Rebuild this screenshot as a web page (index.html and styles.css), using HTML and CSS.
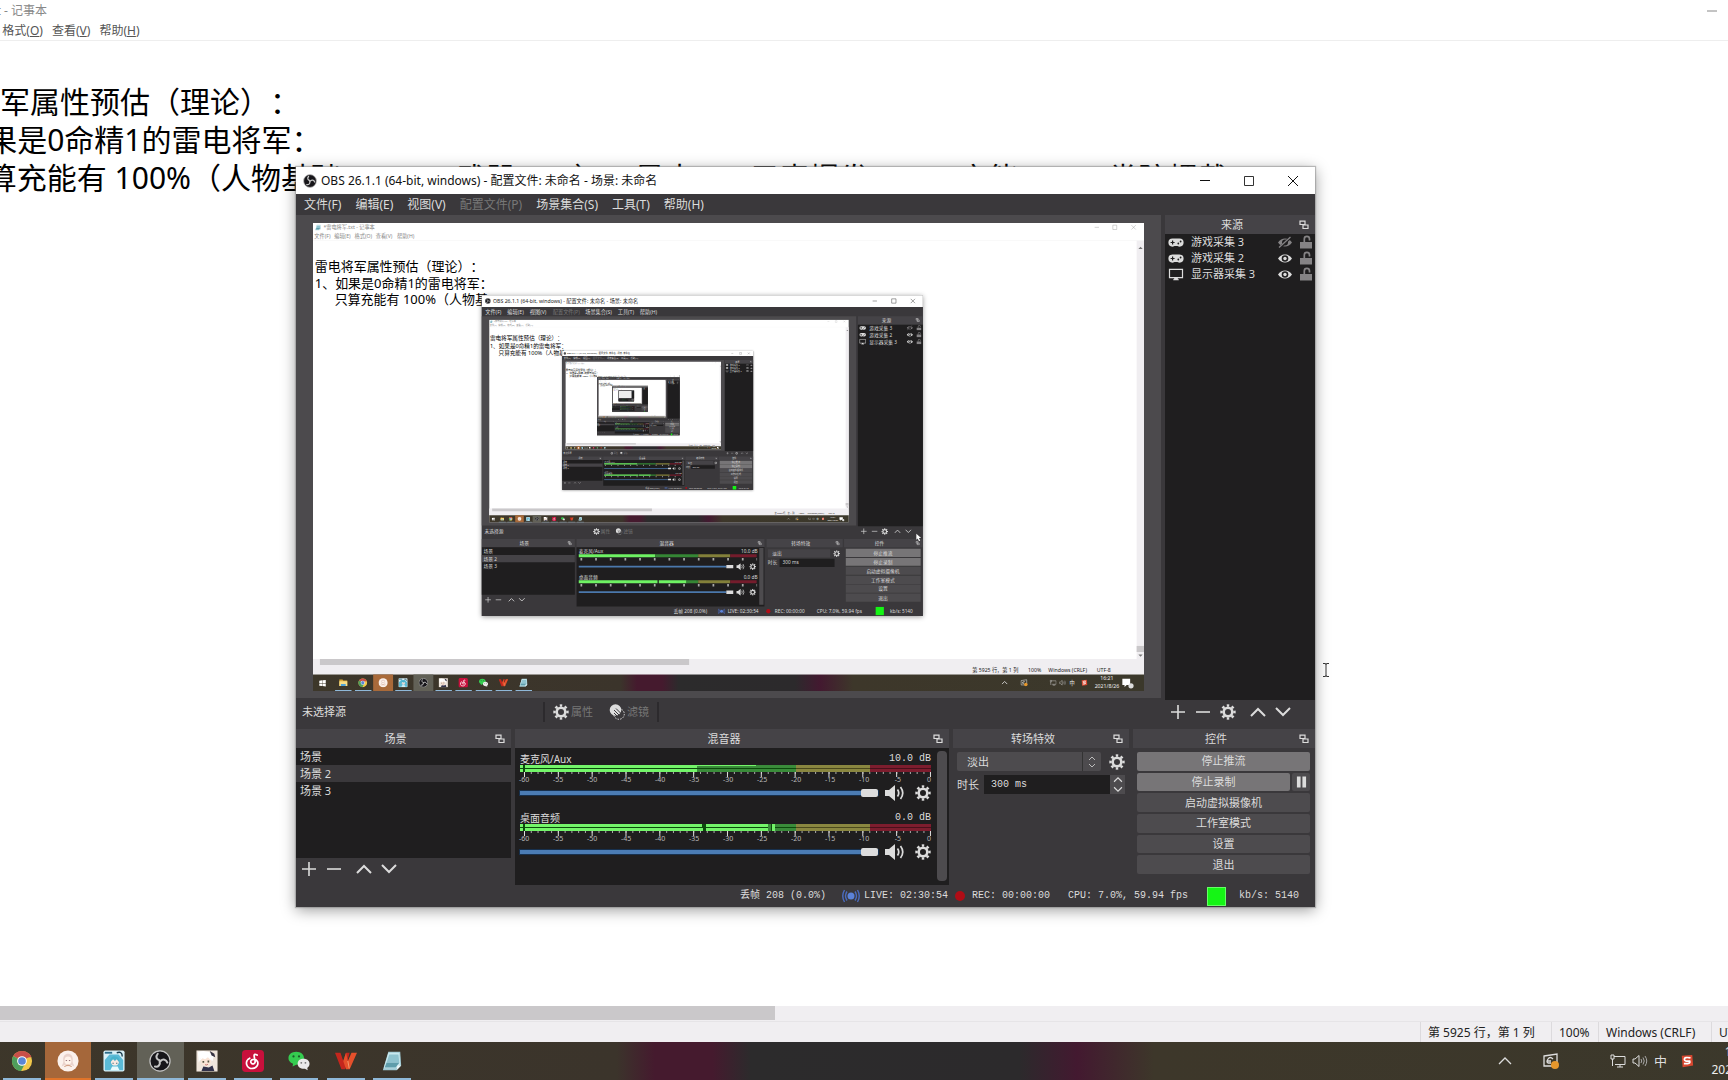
FILE: index.html
```html
<!DOCTYPE html>
<html lang="zh-CN">
<head>
<meta charset="utf-8">
<title>记事本 - OBS</title>
<link rel="stylesheet" href="styles.css">
</head>
<body>
<svg class="defs" aria-hidden="true">
  <defs>
    <symbol id="i-plus" viewBox="0 0 16 16"><path d="M8 1v14M1 8h14" fill="none" stroke="currentColor" stroke-width="1.6"/></symbol>
    <symbol id="i-minus" viewBox="0 0 16 16"><path d="M1 8h14" fill="none" stroke="currentColor" stroke-width="1.6"/></symbol>
    <symbol id="i-up" viewBox="0 0 16 16"><path d="M1 12l7-7 7 7" fill="none" stroke="currentColor" stroke-width="2"/></symbol>
    <symbol id="i-down" viewBox="0 0 16 16"><path d="M1 4l7 7 7-7" fill="none" stroke="currentColor" stroke-width="2"/></symbol>
    <symbol id="i-gear" viewBox="0 0 16 16"><circle cx="8" cy="8" r="4.3" fill="none" stroke="currentColor" stroke-width="2.6"/><circle cx="8" cy="8" r="6.5" fill="none" stroke="currentColor" stroke-width="2.4" pathLength="16" stroke-dasharray="1 1" stroke-dashoffset="0.5"/></symbol>
    <symbol id="i-float" viewBox="0 0 10 10"><path d="M1 1.200h5v3.300H1zM4 5h5v3.500H4z" fill="none" stroke="currentColor" stroke-width="1.2"/></symbol>
    <symbol id="i-pad" viewBox="0 0 16 12"><path d="M4.500 2h7a4 4 0 0 1 0 8.200c-1.300 0-1.800-.7-2.500-.7H7c-.7 0-1.200.7-2.500.7A4 4 0 0 1 4.500 2z" fill="currentColor"/><path d="M4.600 4v4M2.600 6h4" stroke="#1f1e1f" stroke-width="1.2"/><circle cx="10.300" cy="7" r=".9" fill="#1f1e1f"/><circle cx="12.600" cy="5" r=".9" fill="#1f1e1f"/></symbol>
    <symbol id="i-monitor" viewBox="0 0 16 14"><path d="M1 1.500h14v8.800H1z" fill="none" stroke="currentColor" stroke-width="1.300"/><path d="M6 10h4v2h1v1.200H5V12h1z" fill="currentColor"/></symbol>
    <symbol id="i-eye" viewBox="0 0 16 12"><path d="M1 6c3.500-5.300 10.500-5.300 14 0-3.500 5.300-10.500 5.300-14 0z" fill="currentColor"/><circle cx="8" cy="6" r="3.300" fill="#1f1e1f"/><circle cx="8" cy="6" r="1.700" fill="currentColor"/></symbol>
    <symbol id="i-eye-off" viewBox="0 0 16 12"><path d="M1 6c3.500-5.300 10.500-5.300 14 0-3.500 5.300-10.500 5.300-14 0z" fill="currentColor"/><circle cx="8" cy="6" r="3" fill="#1f1e1f"/><path d="M2.500 11.500L14 .5" stroke="#1f1e1f" stroke-width="2.600"/><path d="M2 11L13.500.5" stroke="currentColor" stroke-width="1.300"/></symbol>
    <symbol id="i-lock" viewBox="0 0 12 14"><path d="M4.300 7V4a2.600 2.600 0 0 1 5.200 0v1.500" fill="none" stroke="currentColor" stroke-width="1.700"/><path d="M0 7h12v6.500H0z" fill="currentColor"/></symbol>
    <symbol id="i-speaker" viewBox="0 0 20 16"><path d="M0 5h4l6-5v16l-6-5H0z" fill="currentColor"/><path d="M12.500 4.500q2.500 3.500 0 7M15.500 2q4.500 6 0 12" fill="none" stroke="currentColor" stroke-width="1.700"/></symbol>
    <symbol id="i-filter" viewBox="0 0 16 16"><circle cx="6.500" cy="6" r="5.800" fill="#dcdcdc"/><circle cx="10" cy="10" r="5.300" fill="none" stroke="#dcdcdc" stroke-width="1" stroke-dasharray="1.500 1.200"/><path d="M5 6l5 5M7 4.500l5 5M5 9l3.500 3.500" stroke="#3a383b" stroke-width="1"/></symbol>
    <symbol id="i-live" viewBox="0 0 18 14"><circle cx="9" cy="7" r="3.500" fill="#5b82d8"/><path d="M5 2.500q-3 4.500 0 9M13 2.500q3 4.500 0 9M2.500 1q-3.500 6 0 12M15.500 1q3.500 6 0 12" fill="none" stroke="#4a6cc0" stroke-width="1.400"/></symbol>
    <symbol id="i-obs" viewBox="0 0 24 24"><circle cx="12" cy="12" r="11" fill="#17161a" stroke="#c4c4c4" stroke-width="1.300"/><g fill="none" stroke="#c4c4c4" stroke-width="2.200" stroke-linecap="round"><path d="M12 11.500C8 10.500 7 7 9.500 4.200"/><path d="M12 11.500C8 10.500 7 7 9.500 4.200" transform="rotate(120 12 12)"/><path d="M12 11.500C8 10.500 7 7 9.500 4.200" transform="rotate(240 12 12)"/></g></symbol>
    <symbol id="t-start" viewBox="0 0 24 24"><path d="M3 5l8-1v7.500H3zM12 4l9-1v8.500h-9zM3 12.500h8V20l-8-1zM12 12.500h9V21l-9-1z" fill="#fff"/></symbol>
    <symbol id="t-folder" viewBox="0 0 24 24"><path d="M2 4h8l2 2h10v14H2z" fill="#d9a93a"/><path d="M2 8h20v12H2z" fill="#f7dd86"/><path d="M6 15h12v5H6z" fill="#4ea3d8"/></symbol>
    <symbol id="t-chrome" viewBox="0 0 24 24"><circle cx="12" cy="12" r="11" fill="#f2c84b"/><path d="M12 12L2.500 6.500A11 11 0 0 1 21.500 6.500z" fill="#c94f4a"/><path d="M2.500 6.500A11 11 0 0 0 11 23l4.500-8.500L12 12z" fill="#4f9d5c"/><path d="M12 7h9.800" stroke="#c94f4a" stroke-width="2"/><circle cx="12" cy="12" r="5.300" fill="#fff"/><circle cx="12" cy="12" r="4.200" fill="#5b86d6"/></symbol>
    <symbol id="t-avatar" viewBox="0 0 24 24"><circle cx="12" cy="12" r="11.500" fill="#fbf1ec"/><path d="M7 13C6 6 9 4 12 4s6 2 5 9l2 5-4-2-3 2-3-2-4 2z" fill="#ead3cc"/><ellipse cx="12" cy="11.500" rx="3.800" ry="4.300" fill="#fff3ea"/><path d="M9.500 11.500h1.500M13 11.500h1.500" stroke="#8e6570"/><path d="M8 18q4-3 8 0" stroke="#c98e6e" fill="none"/></symbol>
    <symbol id="t-miku" viewBox="0 0 24 24"><rect x=".5" y=".5" width="23" height="23" rx="2" fill="#d9f0f7"/><path d="M2 11l5-6h10l5 6v11H2z" fill="#5bbad6"/><path d="M2 3h8" stroke="#2c6d8a" stroke-width="2"/><path d="M15 3q6-2 6 4" stroke="#16394a" fill="none" stroke-width="1.500"/><circle cx="13" cy="12.500" r="4.500" fill="#f9e9e2"/><path d="M7.500 14q0-8 6-7 5 0 4.500 7l-3-4-2 2-2-2z" fill="#48b2cc"/><path d="M11 14v1M15 14v1" stroke="#256" stroke-width="1.200"/><path d="M8 22l2-4h6l2 4z" fill="#e8fafd"/></symbol>
    <symbol id="t-paimon" viewBox="0 0 24 24"><path d="M.5.5h23v23H.5z" fill="#efe5dc"/><path d="M2 2q9-3 18 3l-2 7-3-4-5 3-5-2-2 5z" fill="#fff"/><circle cx="11" cy="12" r="5.500" fill="#fae4d6"/><path d="M4 12q1-7 8-6 5 1 5 6l-4-4-3 2-3-1z" fill="#fff"/><path d="M8 12v2M13.500 11.500v2" stroke="#554" stroke-width="1.800"/><path d="M15 1l5 3 1 4-4-2z" fill="#363342"/><path d="M6 23l2-5 6 1 4-2 2 6z" fill="#31314a"/><path d="M10 16q2 1 3-.5" stroke="#b66" fill="none"/></symbol>
    <symbol id="t-netease" viewBox="0 0 24 24"><rect width="24" height="24" rx="4" fill="#c8103c"/><path d="M16.500 5.500q-3.500-1.800-3.300 1l1 5.500a2.400 2.400 0 1 1-2.800-1.500q3.600-1 5.500 2a5.500 5.500 0 0 1-5 7.500 5.800 5.800 0 0 1-3.500-11" fill="none" stroke="#fff" stroke-width="1.900" stroke-linecap="round"/></symbol>
    <symbol id="t-wechat" viewBox="0 0 24 24"><path d="M9 2c5 0 8.500 3 8.500 7S14 16 9 16l-4 2 .5-3C2 13.500.5 11.500.5 9 .5 5 4 2 9 2z" fill="#35cc50"/><circle cx="6" cy="7" r="1.200" fill="#1c5b2a"/><circle cx="12" cy="7" r="1.200" fill="#1c5b2a"/><path d="M17 9.500c4 0 6.500 2.500 6.500 5.500 0 2-1 3.500-2.500 4.500l.5 2.500-3-1.500c-4.500.5-8-2-8-5.500s2.500-5.500 6.500-5.500z" fill="#e9e9e9"/><circle cx="14.500" cy="14" r="1" fill="#777"/><circle cx="19" cy="14" r="1" fill="#777"/></symbol>
    <symbol id="t-wps" viewBox="0 0 24 24"><path d="M0 3h6l3 9 3-9h4l-5 18H7z" fill="#c4261d"/><path d="M12 3l2 9 4-9h6l-8 18h-4L9 12z" fill="#e5502b"/><path d="M14 12l1.500 8" stroke="#f0a070"/></symbol>
    <symbol id="t-notepad" viewBox="0 0 24 24"><path d="M8 2h13l1 15-5 5H2z" fill="#9fc9d3"/><path d="M8 3h12l1 13-5 4H3z" fill="#c9e8ee"/><path d="M9 5h10l1 9H6z" fill="#8fc3cf"/><path d="M6 14h14l-4 5H4z" fill="#5f9dab"/><path d="M17 22l5-5h-4z" fill="#eef8fa"/></symbol>
    <symbol id="s-net" viewBox="0 0 16 14"><path d="M4 2.500h11v8H5M1 1v4h3V1zM2.500 5v7M7 13h6M10 10.500V13" fill="none" stroke="#ddd"/></symbol>
    <symbol id="s-sound" viewBox="0 0 16 14"><path d="M1 5h2l4-3.500v11L3 9H1z" fill="none" stroke="#ddd"/><path d="M9 5q1.500 2 0 4M11 3.500q2.500 3.500 0 7M13 2q3.500 5 0 10" fill="none" stroke="#aaa"/></symbol>
    <symbol id="s-sogou" viewBox="0 0 16 16"><path d="M2 2l12-1 1 12-12 2z" fill="#d8472f"/><path d="M12 4.500Q5 3 5 6t6 2q1.500 3.500-6.500 3" fill="none" stroke="#fff" stroke-width="2"/></symbol>
    <symbol id="s-update" viewBox="0 0 18 18"><path d="M2 4l13-2v12H2z" fill="none" stroke="#ddd" stroke-width="1.300"/><path d="M11 7q-3-3-5 0t0 4h3M5 9h4" fill="none" stroke="#ddd" stroke-width="1.300"/><circle cx="13" cy="13" r="4" fill="#e6972c"/></symbol>
    <linearGradient id="barFill" gradientUnits="userSpaceOnUse" x1="-94" y1="0" x2="1826" y2="0">
      <stop offset="0" stop-color="#3d372a"/><stop offset=".37" stop-color="#3b342b"/><stop offset=".39" stop-color="#451a2e"/><stop offset=".42" stop-color="#451a2e"/><stop offset=".44" stop-color="#2c2b2c"/><stop offset=".58" stop-color="#2c2a2c"/><stop offset=".61" stop-color="#431930"/><stop offset=".65" stop-color="#3d372a"/><stop offset="1" stop-color="#3b382b"/>
    </linearGradient>
  </defs>
</svg>

<div class="desktop">
  <main class="notepad">
    <header class="np-title">
      <svg class="np-icon"><use href="#t-notepad"/></svg>
      <span class="np-name">*雷电将军.txt - 记事本</span>
      <button class="np-min" aria-label="最小化"><svg viewBox="0 0 12 12"><path d="M1 6h10" stroke="#888"/></svg></button>
    </header>
    <nav class="np-menu">
      <button>文件(<u>F</u>)</button><button>编辑(<u>E</u>)</button><button>格式(<u>O</u>)</button><button>查看(<u>V</u>)</button><button>帮助(<u>H</u>)</button>
    </nav>
    <textarea class="np-text" aria-label="文本" wrap="off" spellcheck="false" readonly>

雷电将军属性预估（理论）：
1、如果是0命精1的雷电将军：
      只算充能有 100%（人物基础 + 337，武器 608），暴击 5，元素爆发 180，充能 100，类陀螺戴</textarea>
    <div class="np-scroll"><div class="np-thumb"></div></div>
    <footer class="np-status">
      <span class="st-pos">第 5925 行，第 1 列</span><span class="st-zoom">100%</span><span class="st-eol">Windows (CRLF)</span><span class="st-enc">UTF-8</span>
    </footer>
  </main>
  <footer class="taskbar">
    <div class="apps">
      <button class="plain" aria-label="开始"><svg><use href="#t-start"/></svg></button>
      <button aria-label="文件夹"><svg><use href="#t-folder"/></svg></button>
      <button aria-label="Chrome"><svg><use href="#t-chrome"/></svg></button>
      <button class="alert" aria-label="直播"><svg><use href="#t-avatar"/></svg></button>
      <button aria-label="音乐"><svg><use href="#t-miku"/></svg></button>
      <button class="active" aria-label="OBS"><svg><use href="#i-obs"/></svg></button>
      <button aria-label="游戏"><svg><use href="#t-paimon"/></svg></button>
      <button aria-label="网易云音乐"><svg><use href="#t-netease"/></svg></button>
      <button aria-label="微信"><svg><use href="#t-wechat"/></svg></button>
      <button aria-label="WPS"><svg><use href="#t-wps"/></svg></button>
      <button aria-label="记事本"><svg><use href="#t-notepad"/></svg></button>
    </div>
    <div class="tray">
      <button class="tray-up" aria-label="显示隐藏的图标"><svg viewBox="0 0 14 14"><path d="M1 10l6-6 6 6" fill="none" stroke="#ddd" stroke-width="1.300"/></svg></button>
      <svg class="tray-update"><use href="#s-update"/></svg>
      <svg><use href="#s-net"/></svg>
      <svg><use href="#s-sound"/></svg>
      <span class="ime">中</span>
      <svg><use href="#s-sogou"/></svg>
      <time class="clock">16:21<br>2021/8/26</time>
    </div>
  </footer>
</div>

<section class="obs" aria-label="OBS">
  <header class="obs-title">
    <svg class="obs-logo"><use href="#i-obs"/></svg>
    <h1>OBS 26.1.1 (64-bit, windows) - 配置文件: 未命名 - 场景: 未命名</h1>
    <div class="win-buttons">
      <button aria-label="最小化"><svg viewBox="0 0 12 12"><path d="M1 5.500h10" stroke="#111" fill="none"/></svg></button>
      <button aria-label="最大化"><svg viewBox="0 0 12 12"><path d="M1.500 1.500h9v9h-9z" stroke="#333" fill="none"/></svg></button>
      <button aria-label="关闭"><svg viewBox="0 0 12 12"><path d="M1 1l10 10M11 1L1 11" stroke="#111" fill="none"/></svg></button>
    </div>
  </header>
  <nav class="obs-menu">
    <button>文件(F)</button><button>编辑(E)</button><button>视图(V)</button><button disabled>配置文件(P)</button><button>场景集合(S)</button><button>工具(T)</button><button>帮助(H)</button>
  </nav>

  <div class="upper">
    <div class="stage">
      <div class="preview">
        <svg class="canvas" viewBox="-94 0 1920 1080" preserveAspectRatio="none">
          <g id="desk">
            <rect x="-94" width="1920" height="1080" fill="#fff"/>
            <use href="#t-notepad" x="-90" y="3" width="15" height="15"/>
            <g class="m-soft">
              <text x="-70" y="15">*雷电将军.txt - 记事本</text>
              <text x="-91" y="35">文件(F)</text><text x="-45" y="35">编辑(E)</text><text x="2" y="35">格式(O)</text><text x="51" y="35">查看(V)</text><text x="100" y="35">帮助(H)</text>
            </g>
            <path d="M-94 40.500H1826" stroke="#eee"/>
            <path d="M1712 10h10M1754 5h9v10h-9zM1797 5l10 10M1807 5l-10 10" stroke="#999" fill="none"/>
            <g class="m-body">
              <text x="-90" y="111">雷电将军属性预估（理论）：</text>
              <text x="-90" y="150">1、如果是0命精1的雷电将军：</text>
              <text x="-44" y="188">只算充能有 100%（人物基</text>
            </g>
            <path d="M1809 41h17v965h-17z" fill="#f0eef1"/><path d="M1809 976h17v14h-17z" fill="#cac8ca"/>
            <path d="M1813 60l5-5 5 5zM1813 996l5 5 5-5z" fill="#777"/>
            <path d="M-94 1006H1826v36H-94z" fill="#f0eef1"/><path d="M-78 1006H775v14H-78z" fill="#cac8ca"/>
            <g class="m-status"><text x="1429" y="1037">第 5925 行，第 1 列</text><text x="1558" y="1037">100%</text><text x="1605" y="1037">Windows (CRLF)</text><text x="1717" y="1037">UTF-8</text></g>
            <path d="M-94 1042H1826v38H-94z" fill="url(#barFill)"/>
            <path d="M45 1042h46v38H45z" fill="#a96a3a"/><path d="M138 1042h46v38h-46z" fill="#626157"/>
            <path d="M-43 1079h38M3 1079h38M96 1079h38M189 1079h38M235 1079h38M282 1079h38M328 1079h38M374 1079h38" stroke="#8fb8d8" stroke-width="3"/>
            <g>
              <use href="#t-start" x="-82" y="1052" width="20" height="20"/><use href="#t-folder" x="-35" y="1050" width="22" height="22"/><use href="#t-chrome" x="10" y="1050" width="22" height="22"/><use href="#t-avatar" x="57" y="1050" width="22" height="22"/><use href="#t-miku" x="103" y="1050" width="22" height="22"/><use href="#i-obs" x="150" y="1050" width="22" height="22"/><use href="#t-paimon" x="196" y="1050" width="22" height="22"/><use href="#t-netease" x="242" y="1050" width="22" height="22"/><use href="#t-wechat" x="289" y="1050" width="22" height="22"/><use href="#t-wps" x="335" y="1050" width="22" height="22"/><use href="#t-notepad" x="381" y="1050" width="22" height="22"/>
              <use href="#s-update" x="1540" y="1052" width="18" height="18"/><use href="#s-net" x="1608" y="1054" width="16" height="14"/><use href="#s-sound" x="1630" y="1054" width="16" height="14"/><use href="#s-sogou" x="1680" y="1053" width="16" height="16"/>
            </g>
            <path d="M1498 1064l6-6 6 6" stroke="#ddd" fill="none" stroke-width="2"/>
            <g class="m-tray"><text x="1654" y="1066">中</text><text x="1725" y="1055">16:21</text><text x="1712" y="1074">2021/8/26</text></g>
            <path d="M1776 1052h18v14h-8l-5 5v-5h-5z" fill="#fff"/><circle cx="1796" cy="1068" r="6" fill="#ddd"/>

            <path class="m-shadow" d="M296 167h1019v740H296z"/>
            <path d="M296 167h1019v27H296z" fill="#fff"/>
            <use href="#i-obs" x="303" y="173" width="14" height="14"/>
            <text class="m-title" x="322" y="185">OBS 26.1.1 (64-bit, windows) - 配置文件: 未命名 - 场景: 未命名</text>
            <path d="M1199 180h10M1243 175h10v10h-10zM1287 175l10 10M1297 175l-10 10" stroke="#222" fill="none"/>
            <path d="M296 194h1019v713H296z" fill="#3a383b"/>
            <g class="m-menu"><text x="304" y="209">文件(F)</text><text x="355" y="209">编辑(E)</text><text x="407" y="209">视图(V)</text><text class="m-off" x="460" y="209">配置文件(P)</text><text x="535" y="209">场景集合(S)</text><text x="610" y="209">工具(T)</text><text x="661" y="209">帮助(H)</text></g>
            <path d="M296 215h865v483H296z" fill="#4c4a4d"/>
            <path d="M1165 215h150v20h-150zM296 729h215v19H296zM515 729h434v19H515zM954 729h176v19H954zM1133 729h182v19h-182z" fill="#454347"/>
            <path d="M1165 235h150v465h-150zM296 748h215v110H296zM515 748h434v137H515zM984 775h127v19H984z" fill="#1f1e1f"/>
            <path d="M296 766h215v17H296zM957 753h144v19H957z" fill="#454347"/>
            <path d="M1137 793h173v19h-173zM1137 814h173v19h-173zM1137 834h173v19h-173zM1137 855h173v19h-173z" fill="#4d4b4e"/>
            <path d="M1137 752h173v19h-173zM1137 773h173v18h-173z" fill="#777577"/>
            <g class="m-mid">
              <text x="1231" y="229">来源</text><text x="394" y="743">场景</text><text x="723" y="743">混音器</text><text x="1033" y="743">转场特效</text><text x="1215" y="743">控件</text>
              <text x="1223" y="766">停止推流</text><text x="1223" y="786">停止录制</text><text x="1223" y="807">启动虚拟摄像机</text><text x="1223" y="828">工作室模式</text><text x="1223" y="848">设置</text><text x="1223" y="869">退出</text>
            </g>
            <g class="m-text">
              <text x="1191" y="247">游戏采集 3</text><text x="1191" y="263">游戏采集 2</text><text x="1191" y="279">显示器采集 3</text>
              <text x="302" y="716">未选择源</text><text x="300" y="762">场景</text><text x="300" y="779">场景 2</text><text x="300" y="796">场景 3</text>
              <text x="520" y="762">麦克风/Aux</text><text x="895" y="762">10.0 dB</text><text x="520" y="821">桌面音频</text><text x="901" y="821">0.0 dB</text>
              <text x="967" y="767">淡出</text><text x="957" y="788">时长</text><text x="991" y="788">300 ms</text>
              <text x="739" y="900">丢帧 208 (0.0%)</text><text x="864" y="900">LIVE: 02:30:54</text><text x="973" y="900">REC: 00:00:00</text><text x="1070" y="900">CPU: 7.0%, 59.94 fps</text><text x="1239" y="900">kb/s: 5140</text>
              <text class="m-off" x="571" y="716">属性</text><text class="m-off" x="623" y="716">滤镜</text>
            </g>
            <g color="#dcdcdc">
              <use href="#i-pad" x="1168" y="236" width="16" height="12"/><use href="#i-pad" x="1168" y="252" width="16" height="12"/><use href="#i-monitor" x="1168" y="267" width="16" height="14"/>
              <use href="#i-eye-off" color="#858385" x="1277" y="236" width="16" height="12"/><use href="#i-eye" x="1277" y="252" width="16" height="12"/><use href="#i-eye" x="1277" y="268" width="16" height="12"/>
              <use href="#i-plus" x="1171" y="704" width="15" height="15"/><use href="#i-minus" x="1196" y="704" width="15" height="15"/><use href="#i-gear" x="1219" y="704" width="16" height="16"/><use href="#i-up" x="1249" y="704" width="15" height="15"/><use href="#i-down" x="1274" y="704" width="15" height="15"/>
              <use href="#i-plus" x="303" y="862" width="15" height="15"/><use href="#i-minus" x="327" y="862" width="15" height="15"/><use href="#i-up" x="357" y="862" width="15" height="15"/><use href="#i-down" x="381" y="862" width="15" height="15"/>
              <use href="#i-gear" x="553" y="704" width="16" height="16"/><use href="#i-filter" x="605" y="704" width="16" height="16"/>
              <use href="#i-gear" x="914" y="785" width="16" height="16"/><use href="#i-gear" x="914" y="844" width="16" height="16"/><use href="#i-gear" x="1108" y="755" width="16" height="16"/>
              <use href="#i-speaker" x="884" y="785" width="20" height="16"/><use href="#i-speaker" x="884" y="844" width="20" height="16"/>
              <use href="#i-float" x="1298" y="219" width="10" height="10"/><use href="#i-float" x="494" y="734" width="10" height="10"/><use href="#i-float" x="933" y="734" width="10" height="10"/><use href="#i-float" x="1113" y="734" width="10" height="10"/><use href="#i-float" x="1298" y="734" width="10" height="10"/>
              <use href="#i-live" x="841" y="889" width="18" height="14"/>
            </g>
            <g color="#858385"><use href="#i-lock" x="1300" y="235" width="12" height="13"/><use href="#i-lock" x="1300" y="251" width="12" height="13"/><use href="#i-lock" x="1300" y="267" width="12" height="13"/></g>
            <path d="M520 768H697M520 828H702M705 828H769" stroke="#6ef263" stroke-width="7"/>
            <path d="M697 768h99M769 828h27" stroke="#358635" stroke-width="7"/><path d="M796 768h74M796 828h74" stroke="#83803a" stroke-width="7"/><path d="M870 768h61M870 828h61" stroke="#741c2c" stroke-width="7"/>
            <path d="M524 776H932M524 836H932" stroke="#aaa" stroke-width="6" stroke-dasharray="4 29.900"/>
            <path d="M520 793H861M520 852H861" stroke="#4b78ac" stroke-width="4"/>
            <path d="M861 789h16v8h-16zM861 848h16v8h-16z" fill="#ddd"/><path d="M937 750h10v131h-10z" fill="#4d4b4e"/>
            <circle cx="958" cy="896" r="5" fill="#b00d16"/><path d="M1206 886h19v19h-19z" fill="#15f515"/>
          </g>
          <svg x="313" y="223" width="831" height="468" viewBox="-94 0 1920 1080" preserveAspectRatio="none">
            <use href="#desk"/>
            <svg x="313" y="223" width="831" height="468" viewBox="-94 0 1920 1080" preserveAspectRatio="none">
              <use href="#desk"/>
              <svg x="313" y="223" width="831" height="468" viewBox="-94 0 1920 1080" preserveAspectRatio="none">
                <use href="#desk"/>
                <svg x="313" y="223" width="831" height="468" viewBox="-94 0 1920 1080" preserveAspectRatio="none"><use href="#desk"/><path d="M313 223h831v468H313z" fill="#eee"/></svg>
              </svg>
            </svg>
          </svg>
          <path d="M1300 717v14l3-3 3 6 3-1-3-6h5z" fill="#fff"/>
        </svg>
      </div>
      <div class="source-bar">
        <span class="source-none">未选择源</span>
        <button disabled><svg><use href="#i-gear"/></svg>属性</button>
        <button disabled><svg><use href="#i-filter"/></svg>滤镜</button>
      </div>
    </div>
    <section class="dock sources">
      <h2>来源<svg><use href="#i-float"/></svg></h2>
      <ul>
        <li><svg class="kind"><use href="#i-pad"/></svg><span>游戏采集 3</span><svg class="eye off"><use href="#i-eye-off"/></svg><svg class="lock"><use href="#i-lock"/></svg></li>
        <li><svg class="kind"><use href="#i-pad"/></svg><span>游戏采集 2</span><svg class="eye"><use href="#i-eye"/></svg><svg class="lock"><use href="#i-lock"/></svg></li>
        <li><svg class="kind"><use href="#i-monitor"/></svg><span>显示器采集 3</span><svg class="eye"><use href="#i-eye"/></svg><svg class="lock"><use href="#i-lock"/></svg></li>
      </ul>
      <div class="tools">
        <button aria-label="添加来源"><svg><use href="#i-plus"/></svg></button><button aria-label="移除来源"><svg><use href="#i-minus"/></svg></button><button aria-label="来源属性"><svg><use href="#i-gear"/></svg></button><button class="apart" aria-label="上移来源"><svg><use href="#i-up"/></svg></button><button aria-label="下移来源"><svg><use href="#i-down"/></svg></button>
      </div>
    </section>
  </div>

  <div class="lower">
    <section class="dock scenes">
      <h2>场景<svg><use href="#i-float"/></svg></h2>
      <ul><li>场景</li><li class="current">场景 2</li><li>场景 3</li></ul>
      <div class="tools">
        <button aria-label="添加场景"><svg><use href="#i-plus"/></svg></button><button aria-label="移除场景"><svg><use href="#i-minus"/></svg></button><button class="apart" aria-label="上移场景"><svg><use href="#i-up"/></svg></button><button aria-label="下移场景"><svg><use href="#i-down"/></svg></button>
      </div>
    </section>

    <section class="dock mixer">
      <h2>混音器<svg><use href="#i-float"/></svg></h2>
      <div class="mixer-body">
        <div class="channels">
          <div class="channel">
            <div class="ch-head"><label for="mic">麦克风/Aux</label><output>10.0 dB</output></div>
            <svg class="meter" viewBox="0 0 411 13" preserveAspectRatio="none">
              <path d="M0 0h276v7H0z" fill="#0c4a0c"/><path d="M276 0h74v7h-74z" fill="#4b491c"/><path d="M350 0h61v7h-61z" fill="#48101b"/>
              <path d="M0 0h3v3H0zM0 4h3v3H0zM5 0h172v3H5zM5 4h172v3H5z" fill="#73f569"/><path d="M177 0h99v3h-99zM177 4h99v3h-99z" fill="#3a8c3a"/><path d="M177 0h59v1h-59z" fill="#73f569"/>
              <path d="M276 0h74v3h-74zM276 4h74v3h-74z" fill="#8a8740"/><path d="M350 0h61v3h-61zM350 4h61v3h-61z" fill="#7d1d2e"/>
              <path d="M4 8h407" stroke="#aaa" stroke-width="2" stroke-dasharray="1 5.770"/><path d="M4 9.500h407" stroke="#ddd" stroke-width="5" stroke-dasharray="1 32.830"/>
            </svg>
            <div class="scale"><span>-60</span><span>-55</span><span>-50</span><span>-45</span><span>-40</span><span>-35</span><span>-30</span><span>-25</span><span>-20</span><span>-15</span><span>-10</span><span>-5</span><span>0</span></div>
            <div class="fader"><input id="mic" type="range" min="0" max="100" value="100"><button aria-label="静音"><svg class="spk"><use href="#i-speaker"/></svg></button><button aria-label="音频设置"><svg><use href="#i-gear"/></svg></button></div>
          </div>
          <div class="channel">
            <div class="ch-head"><label for="desk-audio">桌面音频</label><output>0.0 dB</output></div>
            <svg class="meter" viewBox="0 0 411 13" preserveAspectRatio="none">
              <path d="M0 0h276v7H0z" fill="#0c4a0c"/><path d="M276 0h74v7h-74z" fill="#4b491c"/><path d="M350 0h61v7h-61z" fill="#48101b"/>
              <path d="M0 0h3v3H0zM0 4h3v3H0zM5 0h177v3H5zM5 4h178v3H5zM186 0h62v3h-62zM186 4h62v3h-62zM252 0h3v7h-3z" fill="#73f569"/><path d="M248 0h3v7h-3zM255 0h21v3h-21zM255 4h21v3h-21z" fill="#3a8c3a"/>
              <path d="M276 0h74v3h-74zM276 4h74v3h-74z" fill="#8a8740"/><path d="M350 0h61v3h-61zM350 4h61v3h-61z" fill="#7d1d2e"/>
              <path d="M4 8h407" stroke="#aaa" stroke-width="2" stroke-dasharray="1 5.770"/><path d="M4 9.500h407" stroke="#ddd" stroke-width="5" stroke-dasharray="1 32.830"/>
            </svg>
            <div class="scale"><span>-60</span><span>-55</span><span>-50</span><span>-45</span><span>-40</span><span>-35</span><span>-30</span><span>-25</span><span>-20</span><span>-15</span><span>-10</span><span>-5</span><span>0</span></div>
            <div class="fader"><input id="desk-audio" type="range" min="0" max="100" value="100"><button aria-label="静音"><svg class="spk"><use href="#i-speaker"/></svg></button><button aria-label="音频设置"><svg><use href="#i-gear"/></svg></button></div>
          </div>
        </div>
        <div class="mixer-scroll"></div>
      </div>
    </section>

    <section class="dock transitions">
      <h2>转场特效<svg><use href="#i-float"/></svg></h2>
      <div class="row"><div class="combo"><select aria-label="转场特效"><option>淡出</option></select><span class="arrows"><svg viewBox="0 0 8 12"><path d="M1 4l3-3 3 3M1 8l3 3 3-3" fill="none" stroke="#bbb"/></svg></span></div><button class="gear" aria-label="转场属性"><svg><use href="#i-gear"/></svg></button></div>
      <div class="row"><label for="dur">时长</label><input id="dur" type="text" value="300 ms"><span class="spin"><button aria-label="增加"><svg><use href="#i-up"/></svg></button><button aria-label="减少"><svg><use href="#i-down"/></svg></button></span></div>
    </section>

    <section class="dock controls">
      <h2>控件<svg><use href="#i-float"/></svg></h2>
      <div class="buttons">
        <button class="on">停止推流</button>
        <div class="rec"><button class="on">停止录制</button><button class="pause" aria-label="暂停录制"><svg viewBox="0 0 12 12"><path d="M1 0h4v12H1zM7 0h4v12H7z" fill="#dcdcdc"/></svg></button></div>
        <button>启动虚拟摄像机</button>
        <button>工作室模式</button>
        <button>设置</button>
        <button>退出</button>
      </div>
    </section>
  </div>

  <footer class="obs-status">
    <span class="drop">丢帧 208 (0.0%)</span>
    <svg class="live"><use href="#i-live"/></svg>
    <span class="live-time">LIVE: 02:30:54</span>
    <i class="dot"></i>
    <span class="rec-time">REC: 00:00:00</span>
    <span class="cpu">CPU: 7.0%, 59.94 fps</span>
    <i class="health"></i>
    <span class="rate">kb/s: 5140</span>
  </footer>
</section>

<svg class="caret" viewBox="0 0 8 14" aria-hidden="true"><path d="M1 .5h2.500l.5 1 .5-1H7M1 13.500h2.500l.5-1 .5 1H7M4 1v12" fill="none" stroke="#333"/></svg>
</body>
</html>
```
FILE: styles.css
```css
* { box-sizing: border-box; }
body { margin: 0; height: 100vh; overflow: hidden; background: #fff; font: 12px/16px "Noto Sans", "Noto Sans CJK SC", sans-serif; color: #111; }
button, input, select, textarea { font: inherit; color: inherit; border: 0; padding: 0; margin: 0; background: none; }
h1, h2, ul { margin: 0; padding: 0; font-weight: 400; list-style: none; }
svg { display: block; flex: none; }
.defs { position: absolute; width: 0; height: 0; }

/* the desktop is wider than the view on both sides */
.desktop { display: flex; flex-direction: column; height: 100vh; margin: 0 -98px 0 -94px; }
.notepad { flex: 1; display: flex; flex-direction: column; min-height: 0; background: #fff; }
.np-title { display: flex; align-items: center; gap: 4px; height: 22px; padding: 0 98px 0 4px; color: #888; }
.np-icon { width: 14px; height: 14px; }
.np-name { flex: 1; }
.np-min svg { width: 12px; height: 12px; margin-right: 10px; }
.np-menu { display: flex; gap: 9px; height: 19px; padding: 0 3px; border-bottom: 1px solid #eee; color: #555; }
.np-menu button { line-height: 18px; }
.np-text { flex: 1; min-height: 0; display: block; width: 100%; padding: 4px 4px; resize: none; overflow: hidden; outline: 0; font-size: 30px; line-height: 38px; color: #000; text-spacing-trim: space-all; }
.np-scroll { height: 15px; padding-left: 16px; background: #f0eef1; }
.np-thumb { width: 853px; height: 14px; background: #cac8ca; }
.np-status { display: flex; justify-content: flex-end; height: 21px; padding-right: 98px; background: #f0eef1; border-top: 1px solid #e6e4e7; line-height: 21px; color: #222; }
.np-status span { border-left: 1px solid #dcdadd; padding-left: 7px; white-space: nowrap; }
.st-pos { width: 131px; }
.st-zoom { width: 47px; }
.st-eol { width: 113px; }
.st-enc { width: 17px; }

.taskbar { display: flex; justify-content: space-between; height: 38px; background: linear-gradient(90deg, #3d372a 0, #3b342b 37%, #451a2e 39%, #451a2e 42%, #2c2b2c 44%, #2c2a2c 58%, #431930 61%, #3d372a 65%, #3b382b 100%); }
.apps { display: flex; width: 509px; }
.apps button { flex: 1; display: flex; flex-direction: column; align-items: center; justify-content: space-between; padding-top: 8px; }
.apps button::after { content: ""; width: 38px; height: 2px; background: #8fb8d8; }
.apps .plain::after { visibility: hidden; }
.apps .alert { background: #a5673a; }
.apps .alert::after { width: 100%; background: #e0742a; }
.apps .active { background: #626157; }
.apps .active::after { width: 100%; }
.apps svg { width: 22px; height: 22px; }
.tray { display: flex; align-items: center; color: #ddd; }
.tray svg { width: 16px; height: 14px; margin-right: 6px; }
.tray .tray-up svg { width: 14px; margin-right: 30px; }
.tray .tray-update { width: 18px; height: 18px; margin-right: 50px; }
.ime { margin-right: 12px; font-size: 13px; }
.clock { width: 60px; margin-left: 9px; margin-right: 56px; text-align: center; line-height: 18px; color: #eee; }

.obs { position: absolute; left: 296px; top: 167px; width: 1019px; display: flex; flex-direction: column; background: #3a383b; color: #dcdcdc; box-shadow: 0 0 1px 1px #8888, 0 3px 14px #0006; font-size: 11px; }
.obs-title { display: flex; align-items: center; gap: 4px; height: 27px; padding-left: 7px; background: #fff; color: #111; }
.obs-logo { width: 14px; height: 14px; }
.obs-title h1 { flex: 1; font-size: 12px; }
.win-buttons { display: flex; }
.win-buttons button { width: 44px; display: flex; justify-content: center; }
.win-buttons svg { width: 12px; height: 12px; }
.obs-menu { display: flex; gap: 14px; height: 21px; padding: 0 8px; font-size: 12px; }
.obs-menu button { line-height: 20px; }
.obs-menu button:disabled { color: #777; }

.upper { display: flex; gap: 4px; }
.stage { flex: 1; }
.preview { padding: 8px 17px 7px; background: #4c4a4d; }
.canvas { width: 100%; height: 468px; }
.source-bar { display: flex; align-items: center; height: 31px; padding: 0 6px 3px; }
.source-none { width: 241px; }
.source-bar button { display: flex; align-items: center; gap: 2px; height: 20px; padding: 0 8px; color: #777; }
.source-bar button:first-of-type { border-left: 2px solid #2c2a2d; }
.source-bar button:last-of-type { border-right: 2px solid #2c2a2d; }
.source-bar svg { width: 16px; height: 16px; color: #dcdcdc; }

.dock { display: flex; flex-direction: column; min-width: 0; }
.dock h2 { display: grid; grid-template-columns: 1fr 16px; align-items: center; height: 19px; background: #454347; font-size: 11px; text-align: center; }
.dock h2 svg { width: 10px; height: 10px; }
.dock ul { flex: 1; background: #1f1e1f; }
.sources { width: 150px; margin-bottom: 4px; }
.sources h2 { height: 19px; }
.sources li { display: flex; align-items: center; height: 16px; padding: 0 3px; }
.sources span { flex: 1; margin-left: 7px; white-space: nowrap; }
.kind, .eye { width: 16px; height: 13px; }
.eye.off { color: #858385; }
.lock { width: 12px; height: 14px; margin-left: 7px; color: #858385; }
.tools { display: flex; align-items: center; gap: 9px; height: 25px; padding: 0 6px 2px 5px; }
.tools svg { width: 16px; height: 16px; }
.tools .apart { margin-left: 5px; }

.lower { display: grid; grid-template-columns: 215px 434px 176px 1fr; gap: 4px; height: 156px; }
.scenes li { height: 17px; padding-left: 4px; line-height: 17px; }
.scenes .current { background: #3a383b; }
.scenes .tools { height: 27px; padding-bottom: 5px; }
.mixer-body { flex: 1; display: flex; gap: 6px; padding: 3px 2px 4px 5px; background: #1f1e1f; }
.channels { flex: 1; }
.channel { height: 59px; }
.ch-head { display: flex; justify-content: space-between; height: 14px; font-size: 10px; }
.ch-head output { font-family: "Liberation Mono", monospace; }
.meter { width: 100%; height: 13px; }
.scale { display: flex; justify-content: space-between; height: 5px; font-size: 7px; line-height: 4px; color: #bbb; }
.scale span { width: 10px; margin-right: -1px; text-align: center; white-space: nowrap; }
.scale span:last-child { width: 4px; margin-right: 0; }
.scale span:first-child { margin-left: -1px; }
.fader { display: flex; align-items: center; height: 20px; }
.fader input { flex: 1; min-width: 0; height: 10px; margin-right: 7px; appearance: none; }
.fader input::-webkit-slider-runnable-track { height: 4px; background: #4b7cb4; box-shadow: 0 0 0 1px #17304d; }
.fader input::-webkit-slider-thumb { appearance: none; width: 17px; height: 8px; margin-top: -2px; border-radius: 2px; background: #ddd; }
.fader svg { width: 16px; height: 16px; }
.fader .spk { width: 20px; margin-right: 10px; }
.mixer-scroll { width: 10px; border-radius: 4px; background: #4d4b4e; }

.row { display: flex; align-items: center; height: 19px; margin: 4px 4px 0; }
.row + .row { margin-top: 4px; }
.combo { flex: 1; display: flex; height: 19px; border-radius: 2px; background: #4d4b4e; }
.combo select { flex: 1; appearance: none; padding-left: 10px; outline: 0; }
.arrows { width: 19px; display: flex; align-items: center; justify-content: center; border-left: 1px solid #333; }
.arrows svg { width: 8px; height: 12px; }
.gear { margin: 0 0 0 8px; }
.gear svg { width: 16px; height: 16px; }
.row label { width: 27px; }
.row input { flex: 1; min-width: 0; height: 19px; padding-left: 7px; background: #1f1e1f; font: 10px "Liberation Mono", monospace; }
.spin { display: grid; width: 15px; height: 19px; background: #4d4b4e; }
.spin button { display: flex; align-items: center; justify-content: center; }
.spin svg { width: 12px; height: 9px; }

.buttons { display: grid; grid-auto-rows: 1fr; gap: 2px; height: 126px; padding: 4px 5px 0 4px; }
.buttons button { border-radius: 2px; background: #4d4b4e; line-height: 18px; }
.buttons .on { background: #777577; }
.rec { display: flex; gap: 2px; }
.rec .on { flex: 1; }
.rec .pause { width: 18px; display: flex; align-items: center; justify-content: center; }
.pause svg { width: 11px; height: 12px; }

.obs-status { display: flex; align-items: center; justify-content: flex-end; height: 22px; padding-right: 16px; font: 10px/16px "Liberation Mono", "Noto Sans CJK SC", monospace; white-space: nowrap; }
.live { width: 18px; height: 14px; margin: 0 4px 0 16px; }
.dot { width: 10px; height: 10px; margin: 0 7px 0 7px; border-radius: 50%; background: #b00d16; }
.cpu { margin: 0 19px 0 18px; }
.health { width: 19px; height: 19px; margin-right: 13px; background: #15f515; border: 1px solid #6f6; }

/* small desktop shown in the preview */
.canvas text { text-spacing-trim: space-all; }
.m-soft { font-size: 12px; fill: #888; }
.m-body { font-size: 30px; fill: #000; }
.m-status, .m-title { font-size: 12px; fill: #222; }
.m-tray { font-size: 12px; fill: #eee; }
.m-menu { font-size: 12px; fill: #dcdcdc; }
.m-text { font-size: 11px; fill: #dcdcdc; }
.m-mid { font-size: 11px; fill: #dcdcdc; text-anchor: middle; }
.m-off { fill: #777; }
.m-shadow { fill: #444; filter: drop-shadow(0 2px 6px #0006); }

.caret { position: absolute; left: 1322px; top: 663px; width: 8px; height: 14px; }
```
